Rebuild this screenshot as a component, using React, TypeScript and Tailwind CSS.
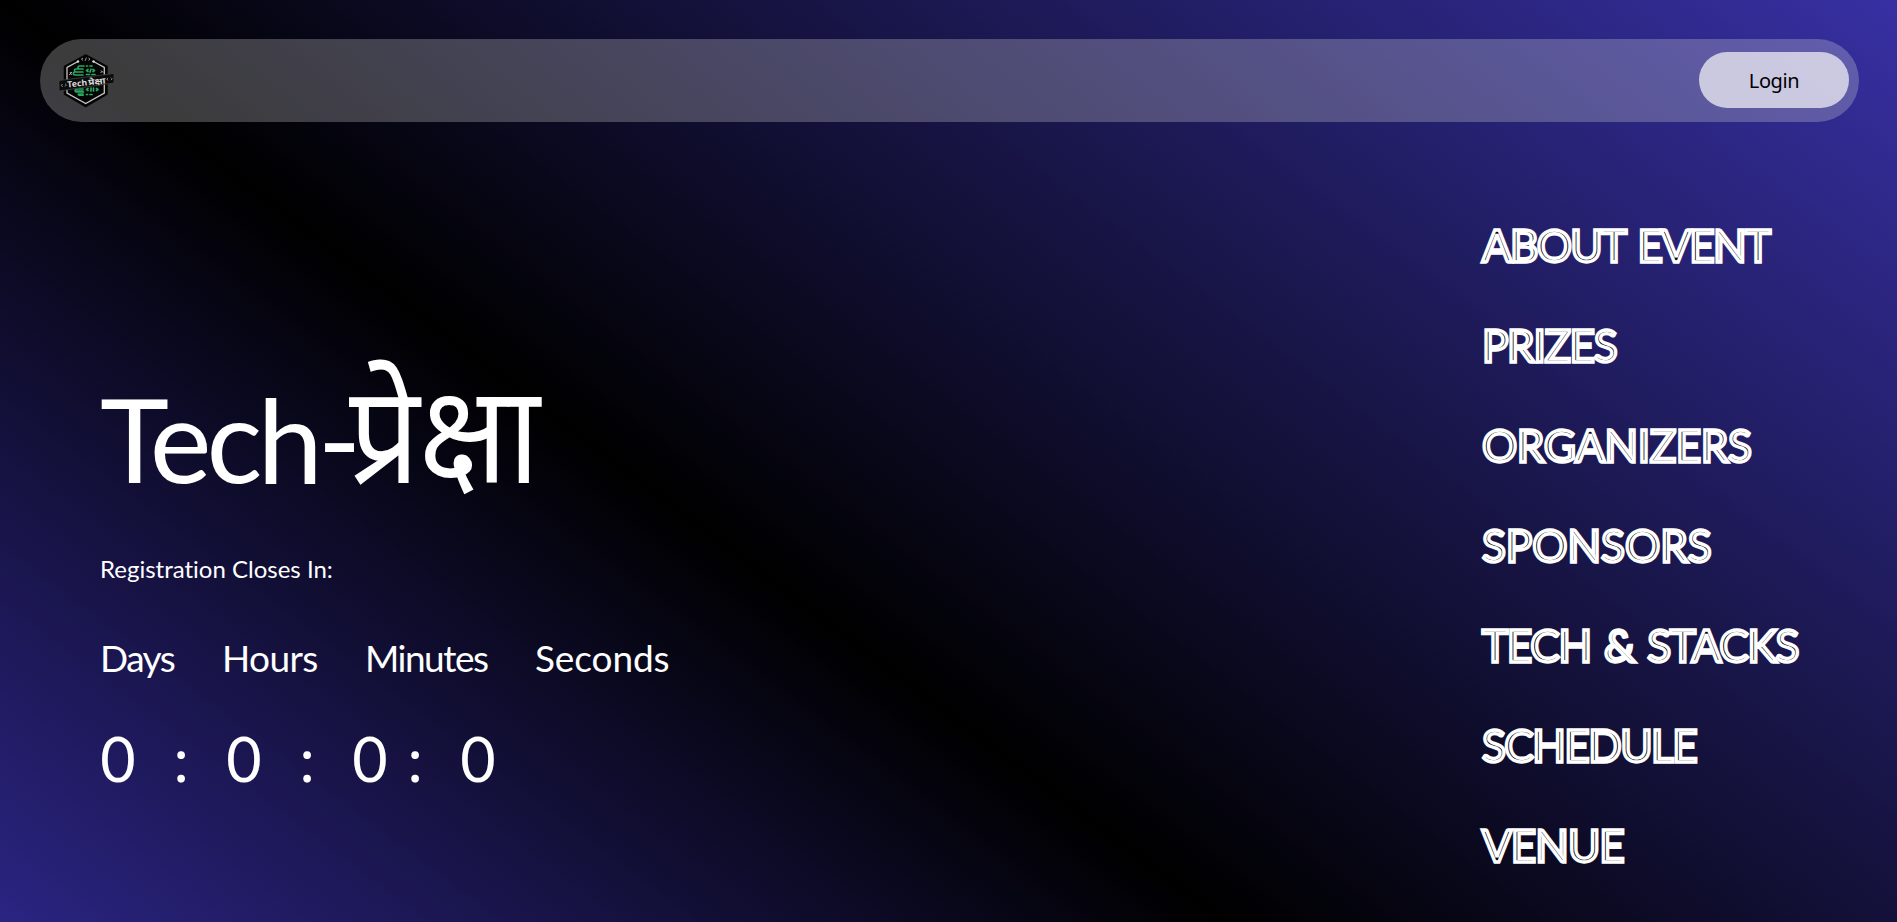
const menu = [
  { label: "ABOUT EVENT", cls: "tracking-[-1.7px] [word-spacing:4px]" },
  { label: "PRIZES", cls: "tracking-[-1.3px]" },
  { label: "ORGANIZERS", cls: "tracking-[-0.4px]" },
  { label: "SPONSORS", cls: "tracking-normal" },
  { label: "TECH & STACKS", cls: "tracking-[-1.2px] [word-spacing:3px]" },
  { label: "SCHEDULE", cls: "tracking-[-1.5px]" },
  { label: "VENUE", cls: "tracking-[-0.95px]" },
];

const units = [
  { label: "Days", cls: "w-[122px] tracking-[-1.5px]" },
  { label: "Hours", cls: "w-[143px] tracking-[-0.6px]" },
  { label: "Minutes", cls: "w-[170px] tracking-[-1.5px]" },
  { label: "Seconds", cls: "tracking-[-0.1px]" },
];

const clock = [
  { text: "0", cls: "w-9" },
  { text: ":", cls: "w-[90px]" },
  { text: "0", cls: "w-9" },
  { text: ":", cls: "w-[90px]" },
  { text: "0", cls: "w-9" },
  { text: ":", cls: "w-[54px]" },
  { text: "0", cls: "ml-[18px] w-9" },
];

function Logo() {
  return (
    <svg viewBox="0 0 70 70" className="h-[70px] w-[70px]" fill="none">
      <path d="M35.7 9 57 20.5V48L35.7 60.5 14.5 48V20.5Z" fill="#050505" stroke="#050505" strokeWidth="1.5" strokeLinejoin="round" />
      <path d="M28 15.5 17 21.5V47L35.7 57.5 54.3 47V21.5L43.5 15.5" stroke="#c4c4c4" strokeWidth="1.3" />
      <circle cx="28" cy="15.5" r="1.2" fill="#ddd" />
      <circle cx="43.5" cy="15.5" r="1.2" fill="#ddd" />
      <path d="M33 12l-1.5 1.2 1.5 1.2M38.5 12l1.5 1.2-1.5 1.2M36.4 11.6l-1.2 3.2" stroke="#bbb" strokeWidth=".8" />
      <path d="M19 29l3-3M20 26l1.5 3M51 24.500l2 2M50.500 27l2-2" stroke="#aaa" strokeWidth="1" />
      <g stroke="#27a862" strokeWidth="1.7" strokeLinecap="round" strokeLinejoin="round">
        <path d="M34 20h-4.500q-1.500 0-1.500 1.500t1.500 1.500H33M33 23H26q-1.500 0-1.500 1.500T26 26h7M33 26h-8q-1.700 0-1.700 1.500T25 29h8" />
        <path d="M33 45h-8M33 43h-7q-1.500 1 0 3h7.500M33 48h-4q-1.500 0 0 1.200h4" />
        <path d="M36.500 20h1M40 20h2M38 23.500l-1.500 1 1.500 1M41 23.200l-1 2.800M43 23.500l1.500 1-1.500 1M36.500 28.500h3M42 28.500h3" />
        <path d="M38 42.500l-1.500 1 1.500 1M41 42v3M43.500 42v3M46.500 42.500l1.500 1-1.500 1M36.500 48.500h1M40 48.500h2" />
      </g>
      <path d="M9 34.500 64 27.500V37L9 45Z" fill="#0b0b0b" stroke="#444" strokeWidth=".8" />
      <path d="M12.500 38l-1.300 1.500 1.600 1.200M15 37.700l1.300 1.200-1.300 1.500M58 32l-1.200 1.300 1.400 1M61 31.600l1.200 1.200-1.200 1.300" stroke="#aaa" strokeWidth=".8" />
      <g transform="rotate(-6 18 41)" fill="#d8d8d8" className="font-['Noto_Sans',sans-serif] font-bold">
        <text x="17.500" y="41.500" fontSize="8.500" textLength="20" lengthAdjust="spacingAndGlyphs">Tech</text>
        <text x="38.500" y="41.500" fontSize="8.500" textLength="17.500" lengthAdjust="spacingAndGlyphs">प्रेक्षा</text>
      </g>
    </svg>
  );
}

export default function App() {
  return (
    <div className="h-[922px] overflow-hidden bg-[linear-gradient(to_top_right,#4338ca,#000,#3730a3)] bg-[length:1897px_1427px] bg-no-repeat font-[Lato,'Noto_Sans',sans-serif] text-white [font-variant-ligatures:none]">
      <div className="px-10 pt-[39px]">
        <header className="flex h-[83px] w-[1819px] items-center justify-between rounded-full bg-[rgba(220,220,220,0.27)] pr-[10px] pl-[10px]">
          <Logo />
          <button className="mb-[2px] h-14 w-[150px] rounded-full bg-[rgba(240,240,245,0.74)] pt-[3px] font-['Noto_Sans',sans-serif] text-[20px] leading-6 tracking-[-0.4px] text-black">
            Login
          </button>
        </header>
      </div>
      <main className="flex justify-between pl-[100px]">
        <section className="pt-[236px]">
          <h1 className="h-[160px] text-[117px] leading-[160px] tracking-[-5px] whitespace-nowrap">
            Tech-
            <span className="-ml-[7px] inline-block origin-left scale-x-[0.9] font-['Noto_Sans',sans-serif] text-[138px] leading-none tracking-[-1px] [font-variant-ligatures:normal]">प्रेक्षा</span>
          </h1>
          <p className="mt-[35px] text-2xl leading-8">Registration Closes In:</p>
          <div className="mt-[51px] flex text-[37px] leading-[44px]">
            {units.map((u) => (
              <span key={u.label} className={u.cls}>{u.label}</span>
            ))}
          </div>
          <div className="mt-[43px] flex text-center text-[61px] leading-[72px]">
            {clock.map((c, i) => (
              <span key={i} className={c.cls}>{c.text}</span>
            ))}
          </div>
        </section>
        <nav className="flex w-[415px] flex-col pt-[73px] text-[44px] leading-[100px] whitespace-nowrap text-black [-webkit-text-stroke:3.3px_white]">
          {menu.map((m) => (
            <a key={m.label} className={m.cls}>{m.label}</a>
          ))}
        </nav>
      </main>
    </div>
  );
}
